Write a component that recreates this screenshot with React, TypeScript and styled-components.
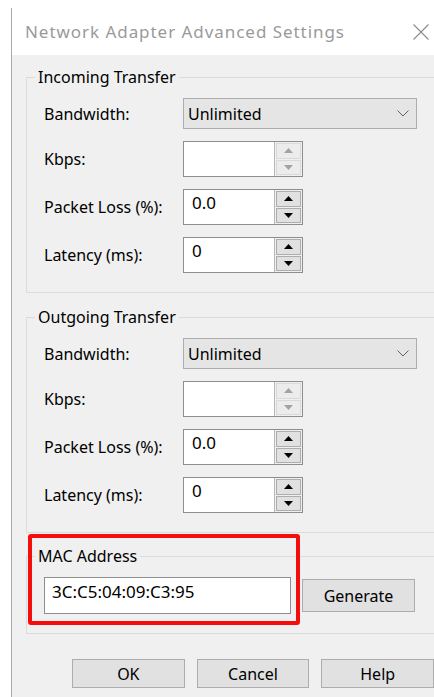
import React from "react";
import styled, { createGlobalStyle } from "styled-components";

const GlobalStyle = createGlobalStyle`
  html, body {
    margin: 0;
    padding: 0;
    background: #ffffff;
    overflow: hidden;
  }
  body {
    font-family: "Noto Sans", "Open Sans", sans-serif;
    font-size: 16px;
    color: #000000;
  }
`;

const Window = styled.div`
  margin: 8px 0 0 11px;
  width: 423px;
  height: 689px;
  box-sizing: border-box;
  border-left: 1px solid #a8a8a8;
  display: flex;
  flex-direction: column;
`;

const TitleBar = styled.div`
  flex: none;
  height: 47px;
  display: flex;
  align-items: center;
  background: #ffffff;
  padding-left: 13px;
`;

const Title = styled.div`
  flex: 1;
  font-size: 17px;
  letter-spacing: 0.95px;
  color: #9a9a9a;
  white-space: nowrap;
`;

const CloseButton = styled.div`
  width: 26px;
  height: 47px;
  display: flex;
  align-items: center;
  justify-content: center;
`;

const Panel = styled.div`
  flex: 1;
  background: #f0f0f0;
  padding: 12px 0 0 14px;
  display: flex;
  flex-direction: column;
`;

const Group = styled.fieldset<{ $gap?: number }>`
  margin: ${(p) => p.$gap ?? 0}px 0 0 0;
  width: 420px;
  min-width: 420px;
  box-sizing: border-box;
  border: 1px solid #dcdcdc;
  padding: 11px 0 19px 17px;
`;

const Caption = styled.legend`
  padding: 0 3px;
  margin-left: -9px;
  line-height: 20px;
  font-size: 16px;
`;

const Form = styled.div`
  display: grid;
  grid-template-columns: 139px auto;
  row-gap: 12px;
  align-items: center;
  justify-items: start;
`;

const Label = styled.div`
  font-size: 16px;
  line-height: 20px;
`;

const Combo = styled.div`
  width: 234px;
  height: 31px;
  box-sizing: border-box;
  background: #e5e5e5;
  border: 1px solid #adadad;
  display: flex;
  align-items: center;
  justify-content: space-between;
  padding: 0 7px 0 4px;
`;

const Spin = styled.div`
  width: 120px;
  height: 36px;
  box-sizing: border-box;
  display: flex;
  border: 1px solid #8e8e8e;
  background: #ffffff;
`;

const SpinText = styled.div`
  flex: 1;
  padding: 3px 0 0 8px;
  line-height: 20px;
  font-size: 17px;
`;

const SpinColumn = styled.div`
  width: 28px;
  box-sizing: border-box;
  display: flex;
  flex-direction: column;
  gap: 1px;
  padding: 1px;
  background: #f0f0f0;
  border-left: 1px solid #b8b8b8;
`;

const SpinButton = styled.div<{ $disabled?: boolean }>`
  flex: 1;
  display: flex;
  align-items: center;
  justify-content: center;
  border: 1px solid ${(p) => (p.$disabled ? "#dadada" : "#adadad")};
  background: ${(p) => (p.$disabled ? "#ececec" : "#e1e1e1")};
`;

const MacWrap = styled.div`
  position: relative;
  margin-top: 13px;
`;

const MacRow = styled.div`
  display: flex;
  align-items: center;
  gap: 11px;
`;

const TextField = styled.div`
  width: 247px;
  height: 37px;
  box-sizing: border-box;
  border: 1px solid #8e8e8e;
  background: #ffffff;
  padding: 4px 0 0 7px;
  line-height: 20px;
  font-size: 17px;
`;

const Button = styled.div<{ $height?: number }>`
  width: 113px;
  height: ${(p) => p.$height ?? 29}px;
  box-sizing: border-box;
  background: #e1e1e1;
  border: 1px solid #adadad;
  display: flex;
  align-items: center;
  justify-content: center;
  font-size: 16px;
`;

const Highlight = styled.div`
  position: absolute;
  left: 2px;
  top: -12px;
  width: 272px;
  height: 91px;
  box-sizing: border-box;
  border: 4px solid #f50d0d;
  border-radius: 3px;
  pointer-events: none;
`;

const ButtonRow = styled.div`
  display: flex;
  gap: 12px;
  margin: 25px 0 0 46px;
`;

const Chevron = () => (
  <svg width="12" height="7" viewBox="0 0 12 7">
    <polyline points="0.5,0.5 6,6 11.5,0.5" fill="none" stroke="#606060" strokeWidth="1" />
  </svg>
);

const Arrow = ({ up, disabled }: { up?: boolean; disabled?: boolean }) => (
  <svg width="9" height="5" viewBox="0 0 9 5">
    <polygon
      points={up ? "0,5 9,5 4.5,0" : "0,0 9,0 4.5,5"}
      fill={disabled ? "#a3a3a3" : "#000000"}
    />
  </svg>
);

const CloseIcon = () => (
  <svg width="16" height="16" viewBox="0 0 16 16">
    <path d="M0.5 0.5 L15.5 15.5 M15.5 0.5 L0.5 15.5" stroke="#8a8a8a" strokeWidth="1.1" />
  </svg>
);

const SpinBox = ({ value, disabled }: { value: string; disabled?: boolean }) => (
  <Spin>
    <SpinText>{value}</SpinText>
    <SpinColumn>
      <SpinButton $disabled={disabled}>
        <Arrow up disabled={disabled} />
      </SpinButton>
      <SpinButton $disabled={disabled}>
        <Arrow disabled={disabled} />
      </SpinButton>
    </SpinColumn>
  </Spin>
);

const TransferGroup = ({ caption, gap }: { caption: string; gap?: number }) => (
  <Group $gap={gap}>
    <Caption>{caption}</Caption>
    <Form>
      <Label>Bandwidth:</Label>
      <Combo>
        <span>Unlimited</span>
        <Chevron />
      </Combo>
      <Label>Kbps:</Label>
      <SpinBox value="" disabled />
      <Label>Packet Loss (%):</Label>
      <SpinBox value="0.0" />
      <Label>Latency (ms):</Label>
      <SpinBox value="0" />
    </Form>
  </Group>
);

export default function App() {
  return (
    <>
      <GlobalStyle />
      <Window>
        <TitleBar>
          <Title>Network Adapter Advanced Settings</Title>
          <CloseButton>
            <CloseIcon />
          </CloseButton>
        </TitleBar>
        <Panel>
          <TransferGroup caption="Incoming Transfer" />
          <TransferGroup caption="Outgoing Transfer" gap={14} />
          <MacWrap>
            <Group>
              <Caption>MAC Address</Caption>
              <MacRow>
                <TextField>3C:C5:04:09:C3:95</TextField>
                <Button $height={33}>Generate</Button>
              </MacRow>
            </Group>
            <Highlight />
          </MacWrap>
          <ButtonRow>
            <Button>OK</Button>
            <Button>Cancel</Button>
            <Button>Help</Button>
          </ButtonRow>
        </Panel>
      </Window>
    </>
  );
}
